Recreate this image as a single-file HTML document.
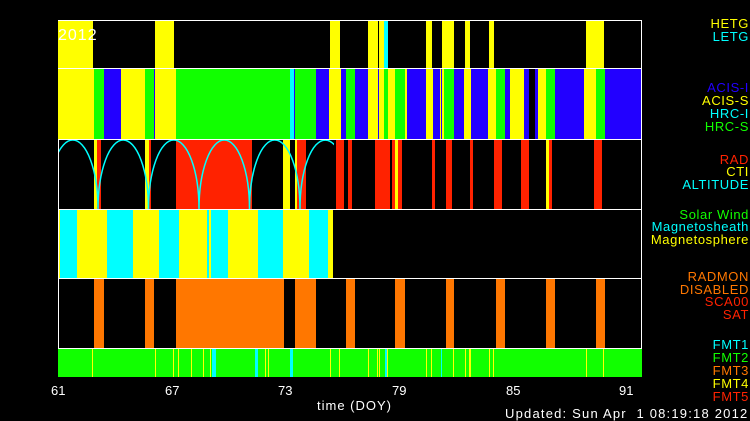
<!DOCTYPE html>
<html><head><meta charset="utf-8"><style>
body{margin:0;background:#000;width:750px;height:420px;overflow:hidden;position:relative;font-family:"Liberation Sans",sans-serif}
.p{position:absolute;left:0;width:750px}
.p i{position:absolute;top:0;height:100%;display:block}
.y{background:#ffff00}.g{background:#11ff00}.b{background:#2200ff}.c{background:#00ffff}.r{background:#ff2200}.o{background:#ff7700}.k{background:#000}
.l{position:absolute;right:1px;font-size:13px;line-height:13px;text-align:right;white-space:pre;letter-spacing:0.6px}
.t{position:absolute;color:#fff;font-size:13px;line-height:13px;white-space:pre}
.h{position:absolute;left:58px;width:584px;height:2px;background:#fff}
</style></head><body>
<div class="p" style="top:21px;height:48px">
<i class="y" style="left:58px;width:35px"></i><i class="y" style="left:155px;width:19px"></i><i class="y" style="left:330px;width:10px"></i><i class="y" style="left:368px;width:10px"></i><i class="y" style="left:379px;width:5px"></i><i class="c" style="left:384px;width:4px"></i><i class="y" style="left:426px;width:6px"></i><i class="y" style="left:442px;width:12px"></i><i class="y" style="left:465px;width:5px"></i><i class="y" style="left:489px;width:5px"></i><i class="y" style="left:586px;width:18px"></i>
</div>
<div class="p" style="top:69px;height:70px">
<i class="y" style="left:58px;width:36px"></i><i class="g" style="left:94px;width:10px"></i><i class="b" style="left:104px;width:17px"></i><i class="y" style="left:121px;width:24px"></i><i class="g" style="left:145px;width:9px"></i><i class="b" style="left:154px;width:1px"></i><i class="y" style="left:155px;width:21px"></i><i class="g" style="left:176px;width:114px"></i><i class="c" style="left:290px;width:4px"></i><i class="b" style="left:294px;width:1px"></i><i class="g" style="left:295px;width:21px"></i><i class="b" style="left:316px;width:13px"></i><i class="y" style="left:329px;width:12px"></i><i class="b" style="left:341px;width:5px"></i><i class="g" style="left:346px;width:9px"></i><i class="b" style="left:355px;width:13px"></i><i class="y" style="left:368px;width:10px"></i><i class="b" style="left:378px;width:1px"></i><i class="y" style="left:379px;width:5px"></i><i class="g" style="left:384px;width:4px"></i><i class="y" style="left:388px;width:7px"></i><i class="g" style="left:395px;width:10px"></i><i class="y" style="left:405px;width:2px"></i><i class="b" style="left:407px;width:19px"></i><i class="y" style="left:426px;width:7px"></i><i class="b" style="left:433px;width:7px"></i><i class="y" style="left:440px;width:1px"></i><i class="b" style="left:441px;width:1px"></i><i class="y" style="left:442px;width:2px"></i><i class="g" style="left:444px;width:10px"></i><i class="b" style="left:454px;width:10px"></i><i class="y" style="left:464px;width:7px"></i><i class="b" style="left:471px;width:17px"></i><i class="y" style="left:488px;width:8px"></i><i class="g" style="left:496px;width:9px"></i><i class="b" style="left:505px;width:5px"></i><i class="y" style="left:510px;width:14px"></i><i class="b" style="left:524px;width:5px"></i><i class="b" style="left:535px;width:3px"></i><i class="y" style="left:538px;width:8px"></i><i class="g" style="left:546px;width:9px"></i><i class="b" style="left:555px;width:29px"></i><i class="y" style="left:584px;width:12px"></i><i class="g" style="left:596px;width:9px"></i><i class="b" style="left:605px;width:36px"></i><i class="g" style="left:641px;width:1px"></i>
</div>
<div class="p" style="top:139px;height:70px">
<i class="y" style="left:94px;width:3px"></i><i class="r" style="left:97px;width:4px"></i><i class="y" style="left:145px;width:4px"></i><i class="r" style="left:149px;width:2px"></i><i class="r" style="left:176px;width:76px"></i><i class="y" style="left:283px;width:7px"></i><i class="y" style="left:295px;width:2px"></i><i class="r" style="left:297px;width:9px"></i><i class="r" style="left:336px;width:8px"></i><i class="r" style="left:348px;width:4px"></i><i class="r" style="left:375px;width:15px"></i><i class="r" style="left:392px;width:3px"></i><i class="y" style="left:395px;width:3px"></i><i class="r" style="left:398px;width:4px"></i><i class="r" style="left:432px;width:3px"></i><i class="r" style="left:446px;width:6px"></i><i class="r" style="left:470px;width:3px"></i><i class="r" style="left:494px;width:8px"></i><i class="r" style="left:521px;width:8px"></i><i class="y" style="left:546px;width:3px"></i><i class="r" style="left:549px;width:3px"></i><i class="r" style="left:594px;width:8px"></i>
</div>
<svg style="position:absolute;left:0;top:0" width="750" height="420">
<defs><clipPath id="cp"><rect x="58" y="139" width="276" height="70"/></clipPath></defs>
<path clip-path="url(#cp)" fill="none" stroke="#00ffff" stroke-width="1.5" d="M47.5,209 A25.25,69 0 0 1 98,209 A25.25,69 0 0 1 148.5,209 A25.25,69 0 0 1 199,209 A25.25,69 0 0 1 249.5,209 A25.25,69 0 0 1 300,209 A25.25,69 0 0 1 350.5,209"/>
</svg>
<div class="p" style="top:209px;height:70px">
<i class="y" style="left:58px;width:2px"></i><i class="c" style="left:60px;width:17px"></i><i class="y" style="left:77px;width:30px"></i><i class="c" style="left:107px;width:26px"></i><i class="y" style="left:133px;width:26px"></i><i class="c" style="left:159px;width:20px"></i><i class="y" style="left:179px;width:28px"></i><i class="c" style="left:207px;width:2px"></i><i class="y" style="left:209px;width:2px"></i><i class="c" style="left:211px;width:17px"></i><i class="y" style="left:228px;width:30px"></i><i class="c" style="left:258px;width:25px"></i><i class="y" style="left:283px;width:26px"></i><i class="c" style="left:309px;width:19px"></i><i class="y" style="left:328px;width:5px"></i>
</div>
<div class="p" style="top:279px;height:70px">
<i class="o" style="left:94px;width:10px"></i><i class="o" style="left:145px;width:9px"></i><i class="o" style="left:176px;width:108px"></i><i class="o" style="left:295px;width:21px"></i><i class="o" style="left:346px;width:9px"></i><i class="o" style="left:395px;width:10px"></i><i class="o" style="left:446px;width:8px"></i><i class="o" style="left:496px;width:9px"></i><i class="o" style="left:546px;width:9px"></i><i class="o" style="left:596px;width:9px"></i>
</div>
<div class="p" style="top:349px;height:28px">
<i class="g" style="left:58px;width:584px"></i>
<i class="y" style="left:92px;width:1px"></i><i class="y" style="left:155px;width:1px"></i><i class="y" style="left:173px;width:1px"></i><i class="y" style="left:178px;width:1px"></i><i class="y" style="left:191px;width:1px"></i><i class="y" style="left:203px;width:1px"></i><i class="y" style="left:210px;width:1px"></i><i class="c" style="left:212px;width:4px"></i><i class="c" style="left:255px;width:3px"></i><i class="y" style="left:265px;width:1px"></i><i class="y" style="left:268px;width:1px"></i><i class="c" style="left:290px;width:3px"></i><i class="y" style="left:330px;width:1px"></i><i class="y" style="left:339px;width:1px"></i><i class="y" style="left:368px;width:1px"></i><i class="y" style="left:377px;width:1px"></i><i class="y" style="left:379px;width:1px"></i><i class="c" style="left:385px;width:2px"></i><i class="y" style="left:387px;width:1px"></i><i class="y" style="left:426px;width:1px"></i><i class="y" style="left:431px;width:1px"></i><i class="c" style="left:441px;width:1px"></i><i class="y" style="left:453px;width:1px"></i><i class="y" style="left:465px;width:1px"></i><i class="y" style="left:469px;width:2px"></i><i class="y" style="left:489px;width:1px"></i><i class="y" style="left:493px;width:1px"></i><i class="y" style="left:586px;width:1px"></i><i class="y" style="left:603px;width:1px"></i>
</div>
<div class="h" style="top:20px;height:1px"></div>
<div class="h" style="top:68px;height:1px"></div>
<div class="h" style="top:139px;height:1px"></div>
<div class="h" style="top:209px;height:1px"></div>
<div class="h" style="top:278px;height:1px"></div>
<div class="h" style="top:348px;height:1px"></div>
<div style="position:absolute;left:58px;top:139px;width:1px;height:209px;background:#fff"></div>
<div style="position:absolute;left:641px;top:20px;width:1px;height:329px;background:#fff"></div>
<div class="t" style="left:58px;top:28px;font-size:16px;line-height:16px;letter-spacing:1px">2012</div>
<div class="t" style="left:51px;top:384px">61</div>
<div class="t" style="left:165px;top:384px">67</div>
<div class="t" style="left:278px;top:384px">73</div>
<div class="t" style="left:392px;top:384px">79</div>
<div class="t" style="left:506px;top:384px">85</div>
<div class="t" style="left:619px;top:384px">91</div>
<div class="t" style="left:317px;top:399px;letter-spacing:1px">time (DOY)</div>
<div class="t" style="left:505px;top:407px;letter-spacing:1.2px">Updated: Sun Apr  1 08:19:18 2012</div>
<div class="l" style="top:17px;color:#ffff00">HETG</div>
<div class="l" style="top:30px;color:#00ffff">LETG</div>
<div class="l" style="top:81px;color:#2200ff">ACIS-I</div>
<div class="l" style="top:94px;color:#ffff00">ACIS-S</div>
<div class="l" style="top:107px;color:#00ffff">HRC-I</div>
<div class="l" style="top:120px;color:#11ff00">HRC-S</div>
<div class="l" style="top:153px;color:#ff2200">RAD</div>
<div class="l" style="top:165px;color:#ffff00">CTI</div>
<div class="l" style="top:178px;color:#00ffff">ALTITUDE</div>
<div class="l" style="top:208px;color:#11ff00">Solar Wind</div>
<div class="l" style="top:220px;color:#00ffff">Magnetosheath</div>
<div class="l" style="top:233px;color:#ffff00">Magnetosphere</div>
<div class="l" style="top:270px;color:#ff7700">RADMON</div>
<div class="l" style="top:283px;color:#ff7700">DISABLED</div>
<div class="l" style="top:295px;color:#ff2200">SCA00</div>
<div class="l" style="top:308px;color:#ff2200">SAT</div>
<div class="l" style="top:338px;color:#00ffff">FMT1</div>
<div class="l" style="top:351px;color:#11ff00">FMT2</div>
<div class="l" style="top:364px;color:#ff7700">FMT3</div>
<div class="l" style="top:377px;color:#ffff00">FMT4</div>
<div class="l" style="top:390px;color:#ff2200">FMT5</div>
</body></html>
